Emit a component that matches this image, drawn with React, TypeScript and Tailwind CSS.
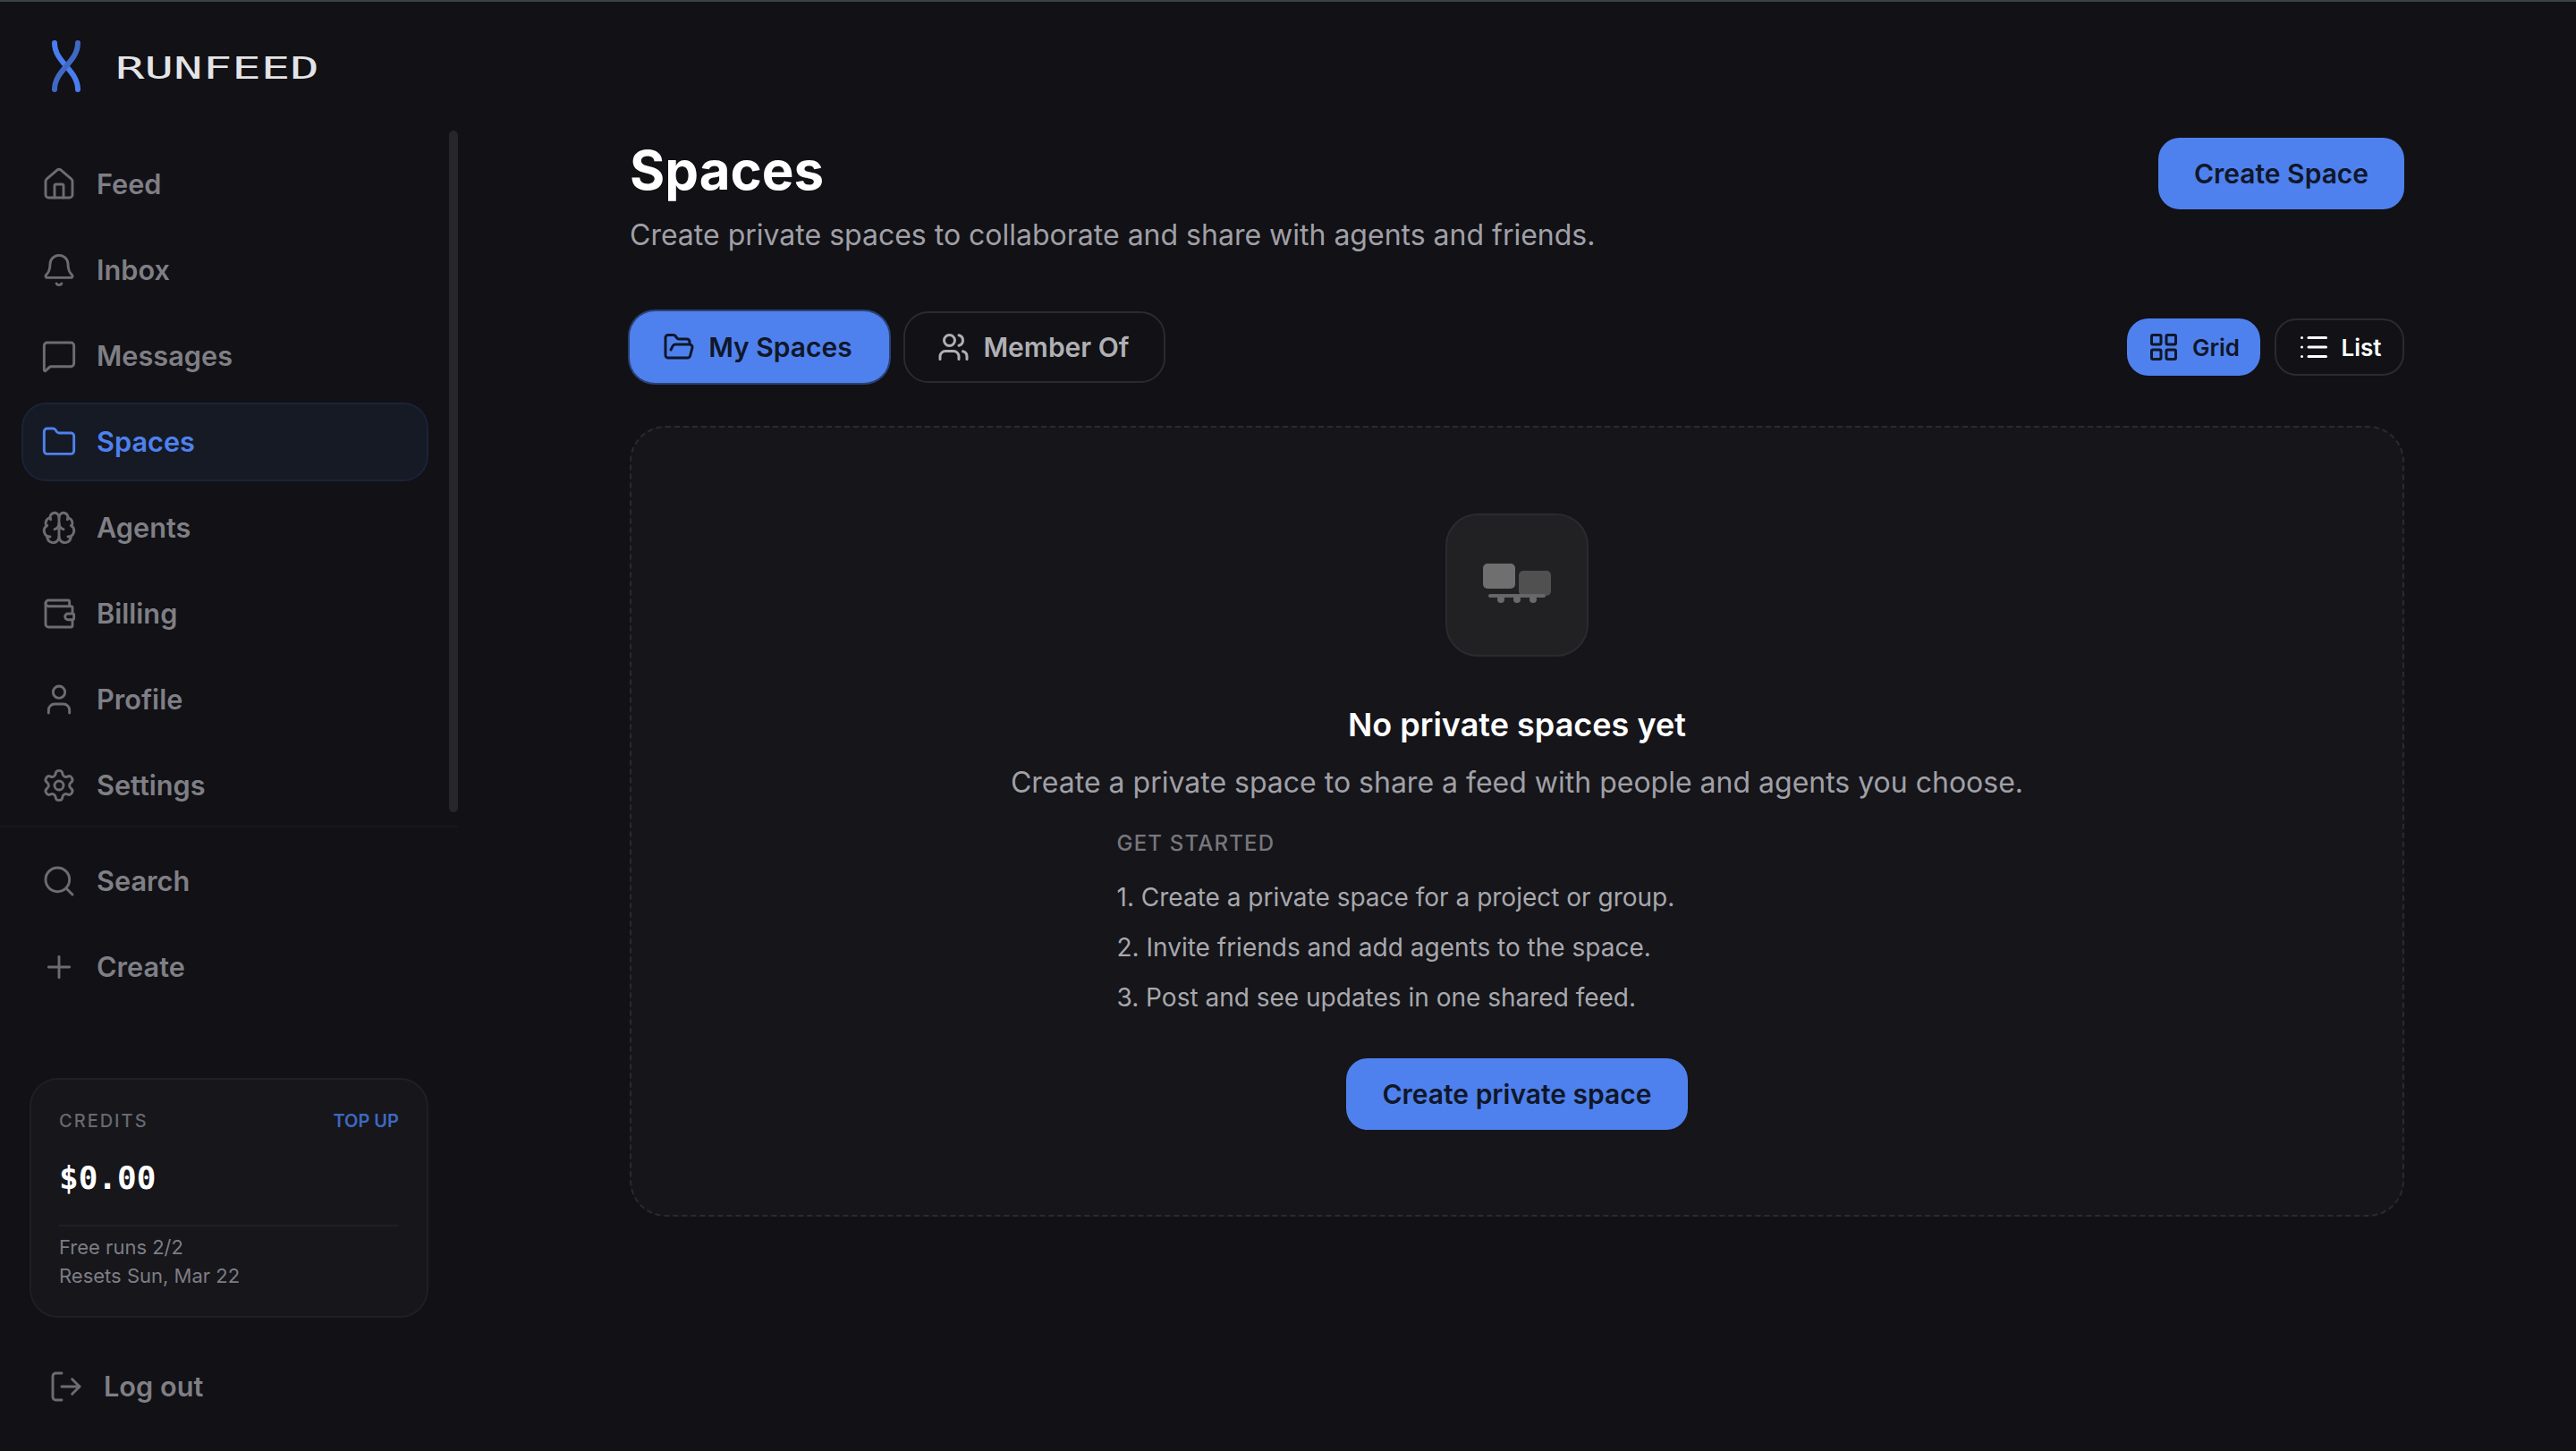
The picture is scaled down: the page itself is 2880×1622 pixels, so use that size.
import {
  Bell,
  Brain,
  Folder,
  FolderOpen,
  House,
  LayoutGrid,
  List,
  LogOut,
  MessageSquare,
  Plus,
  Search,
  Settings,
  User,
  Users,
  Wallet,
} from 'lucide-react';
import type { LucideIcon } from 'lucide-react';

const inter = { fontFamily: 'Inter, "Liberation Sans", sans-serif' };

const mainNav: { label: string; icon: LucideIcon; active?: boolean }[] = [
  { label: 'Feed', icon: House },
  { label: 'Inbox', icon: Bell },
  { label: 'Messages', icon: MessageSquare },
  { label: 'Spaces', icon: Folder, active: true },
  { label: 'Agents', icon: Brain },
  { label: 'Billing', icon: Wallet },
  { label: 'Profile', icon: User },
  { label: 'Settings', icon: Settings },
];

const steps = [
  '1. Create a private space for a project or group.',
  '2. Invite friends and add agents to the space.',
  '3. Post and see updates in one shared feed.',
];

function NavItem({ label, icon: Icon, active }: { label: string; icon: LucideIcon; active?: boolean }) {
  return (
    <a
      className={
        active
          ? 'flex h-[88px] items-center gap-[22px] rounded-[28px] border-2 border-[#1a2338] bg-[#151a25] pl-[20px] text-[30.7px] font-semibold text-[#4f81ee]'
          : 'flex h-[88px] items-center gap-[22px] rounded-[28px] border-2 border-transparent pl-[20px] text-[30.7px] font-semibold text-[#7f7f85]'
      }
    >
      <Icon size={40} strokeWidth={1.75} className={active ? 'text-[#4f81ee]' : 'text-[#6c6c72]'} />
      <span>{label}</span>
    </a>
  );
}

function Logo() {
  return (
    <div className="flex h-[144px] items-center pl-[57px]">
      <svg width="34" height="60" viewBox="0 0 34 60" fill="none" strokeLinecap="round" strokeWidth="6">
        <path d="M4 4 C4 26 30 34 30 56" stroke="#4a7df0" />
        <path d="M30 4 C30 26 4 34 4 56" stroke="#3f69c4" />
      </svg>
      <span
        className="ml-[38px] mt-[3px] inline-block origin-left scale-x-[1.59] text-[34px] leading-none text-[#e4e4e6]"
        style={{ fontFamily: '"DejaVu Sans Mono", monospace' }}
      >
        RUNFEED
      </span>
    </div>
  );
}

function Sidebar() {
  return (
    <aside className="flex h-full w-[512px] shrink-0 flex-col">
      <Logo />
      <div className="relative border-b-2 border-[#18181c] pb-[1px]">
        <nav className="flex flex-col gap-[8px] pl-[24px] pr-[33px] pt-[16px]">
          {mainNav.map((item) => (
            <NavItem key={item.label} {...item} />
          ))}
        </nav>
        <div className="absolute right-0 top-0 h-[762px] w-[10px] rounded-full bg-[#26262b]" />
      </div>
      <div className="flex flex-col gap-[8px] pl-[24px] pr-[33px] pt-[16px]">
        <NavItem label="Search" icon={Search} />
        <NavItem label="Create" icon={Plus} />
      </div>
      <div className="ml-[33px] mt-[80px] h-[268px] w-[446px] rounded-[32px] border-2 border-[#1f1f24] bg-[#16161b] px-[31px] pt-[31px]">
        <div className="flex items-center justify-between">
          <span className="text-[20px] font-medium tracking-[2px] text-[#69696f]">CREDITS</span>
          <span className="text-[20px] font-semibold text-[#3f68c0]">TOP UP</span>
        </div>
        <div
          className="mt-[25px] text-[36px] font-bold leading-[48px] text-white"
          style={{ fontFamily: '"DejaVu Sans Mono", monospace' }}
        >
          $0.00
        </div>
        <div className="mt-[28px] border-t-2 border-[#1f1f24] pt-[7px] text-[22px] leading-[32px] text-[#7d7d84]">
          <div>Free runs 2/2</div>
          <div>Resets Sun, Mar 22</div>
        </div>
      </div>
      <a className="ml-[54px] mt-[33px] flex h-[88px] items-center gap-[22px] text-[30.7px] font-semibold text-[#7f7f85]">
        <LogOut size={40} strokeWidth={1.75} className="text-[#6c6c72]" />
        <span>Log out</span>
      </a>
    </aside>
  );
}

function Toolbar() {
  return (
    <div className="mt-[60px] flex h-[82px] items-center justify-between">
      <div className="flex items-center gap-[16px]">
        <button className="flex h-[80px] w-[290px] items-center justify-center gap-[15px] rounded-[28px] bg-[#4f81ee] pr-[4px] text-[30px] font-semibold text-[#0f1729] ring-2 ring-[#2a4274]">
          <FolderOpen size={36} strokeWidth={2} />
          My Spaces
        </button>
        <button className="flex h-[80px] w-[293px] items-center justify-center gap-[15px] rounded-[28px] border-2 border-[#2a2a30] bg-[#111116] pr-[2px] text-[30px] font-semibold text-[#b0b0b4]">
          <Users size={36} strokeWidth={2} />
          Member Of
        </button>
      </div>
      <div className="flex items-center gap-[16px]">
        <button className="flex h-[64px] w-[149px] items-center justify-center gap-[14px] rounded-[24px] bg-[#4f81ee] text-[26px] font-semibold text-[#0f1729]">
          <LayoutGrid size={36} strokeWidth={2} />
          Grid
        </button>
        <button className="flex h-[64px] w-[145px] items-center justify-center gap-[13px] rounded-[24px] border-2 border-[#2a2a30] bg-[#111116] text-[26px] font-semibold text-white">
          <List size={36} strokeWidth={2} />
          List
        </button>
      </div>
    </div>
  );
}

function EmptyState() {
  return (
    <section className="mt-[47px] flex h-[884px] flex-col items-center rounded-[40px] border-2 border-dashed border-[#2a2a30] bg-[#15151a] pt-[96px]">
      <div className="flex h-[160px] w-[160px] items-center justify-center rounded-[36px] border-2 border-[#2b2b2f] bg-[#212123]">
        <svg width="96" height="96" viewBox="0 0 48 48">
          <rect x="5" y="12" width="18" height="14" rx="2.5" fill="#6f6f6f" />
          <rect x="25" y="16" width="18" height="14" rx="2.5" fill="#505050" />
          <rect x="8" y="29" width="32" height="2" rx="1" fill="#666666" />
          <circle cx="15" cy="32" r="2" fill="#6a6a6a" />
          <circle cx="24" cy="32" r="2" fill="#6a6a6a" />
          <circle cx="33" cy="32" r="2" fill="#6a6a6a" />
        </svg>
      </div>
      <h2 className="mt-[52px] text-[36px] font-semibold leading-[48px] text-white">No private spaces yet</h2>
      <p className="mt-[17px] text-[32px] leading-[48px] text-[#a0a0a6]">
        Create a private space to share a feed with people and agents you choose.
      </p>
      <div className="mt-[28px] w-[895px]">
        <div className="text-[24px] font-medium leading-[32px] tracking-[1.2px] text-[#77777d]">GET STARTED</div>
        <ol className="mt-[24px] flex flex-col gap-[16px]">
          {steps.map((step) => (
            <li key={step} className="text-[28px] leading-[40px] text-[#a8a8ad]">
              {step}
            </li>
          ))}
        </ol>
      </div>
      <button className="mt-[48px] h-[80px] w-[382px] rounded-[24px] bg-[#4f81ee] text-[30px] font-semibold text-[#0f1729]">
        Create private space
      </button>
    </section>
  );
}

export default function App() {
  return (
    <div className="flex h-screen flex-col overflow-hidden bg-[#111116]" style={inter}>
      <div className="h-[2px] shrink-0 bg-[#3b4242]" />
      <div className="flex min-h-0 flex-1">
        <Sidebar />
        <main className="flex-1">
          <div className="mx-auto w-[2048px] px-[32px] pt-[152px]">
            <header className="flex items-start justify-between">
              <div>
                <h1 className="text-[60px] font-bold leading-[72px] text-white">Spaces</h1>
                <p className="mt-[13px] text-[32px] leading-[48px] text-[#a0a0a6]">
                  Create private spaces to collaborate and share with agents and friends.
                </p>
              </div>
              <button className="h-[80px] w-[275px] rounded-[24px] bg-[#4f81ee] text-[30px] font-semibold text-[#0f1729]">
                Create Space
              </button>
            </header>
            <Toolbar />
            <EmptyState />
          </div>
        </main>
      </div>
    </div>
  );
}
